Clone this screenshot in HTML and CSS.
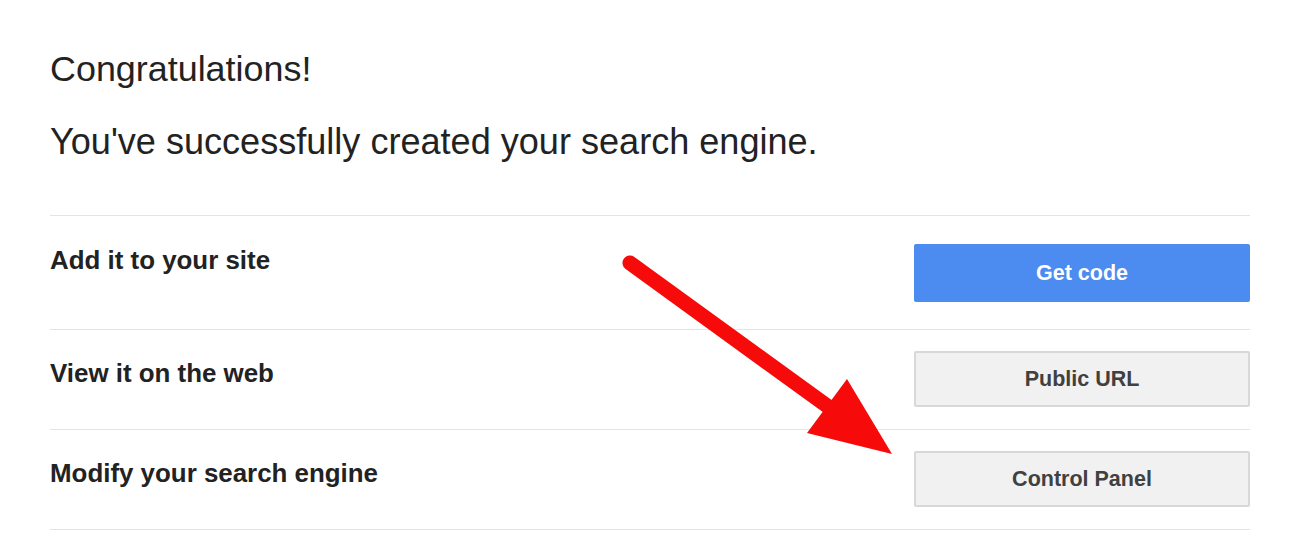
FILE: index.html
```html
<!DOCTYPE html>
<html lang="en">
<head>
<meta charset="utf-8">
<title>Search engine created</title>
<link rel="stylesheet" href="styles.css">
</head>
<body>
<main class="page">
  <h1 class="title">Congratulations!</h1>
  <p class="subtitle">You've successfully created your search engine.</p>
  <section class="rows">
    <div class="row row--first">
      <h2 class="label label--first">Add it to your site</h2>
      <button class="btn btn--primary">Get code</button>
    </div>
    <div class="row">
      <h2 class="label">View it on the web</h2>
      <button class="btn btn--default">Public URL</button>
    </div>
    <div class="row">
      <h2 class="label">Modify your search engine</h2>
      <button class="btn btn--default">Control Panel</button>
    </div>
  </section>
</main>
<svg class="arrow" width="1314" height="554" viewBox="0 0 1314 554" aria-hidden="true">
  <line x1="630" y1="263" x2="830" y2="408" stroke="#f70a0a" stroke-width="15" stroke-linecap="round"/>
  <polygon points="847,379 892,454 807,433" fill="#f70a0a"/>
</svg>
</body>
</html>
```

FILE: styles.css
```css
html, body {
  margin: 0;
  padding: 0;
  background: #ffffff;
}

body {
  font-family: "Liberation Sans", Arial, sans-serif;
  color: #222222;
  width: 1314px;
  height: 554px;
  overflow: hidden;
  position: relative;
}

.page {
  width: 1200px;
  padding: 49px 0 0 50px;
}

.title,
.subtitle {
  font-size: 35.9px;
  font-weight: normal;
  line-height: 41px;
  margin: 0;
}

.subtitle {
  margin-top: 31px;
  font-size: 36.1px;
}

.rows {
  margin-top: 53px;
}

.row {
  display: flex;
  justify-content: space-between;
  align-items: flex-start;
  padding: 21px 0 22px;
  border-top: 1px solid #e4e4e4;
}

.row:last-child {
  border-bottom: 1px solid #e4e4e4;
}

.row--first {
  padding: 28px 0 27px;
}

.label {
  font-size: 25.9px;
  font-weight: bold;
  line-height: 30px;
  margin: 7px 0 0;
}

.label--first {
  margin-top: 1px;
}

.btn {
  width: 336px;
  font-family: "Liberation Sans", Arial, sans-serif;
  font-size: 21.5px;
  font-weight: bold;
  border-radius: 2px;
  padding: 0;
  cursor: pointer;
}

.btn--primary {
  height: 58px;
  background: #4c8bf0;
  color: #ffffff;
  border: none;
}

.btn--default {
  height: 56px;
  background: #f1f1f1;
  color: #404040;
  border: 2px solid #d8d8d8;
}

.arrow {
  position: absolute;
  left: 0;
  top: 0;
  pointer-events: none;
}
```
